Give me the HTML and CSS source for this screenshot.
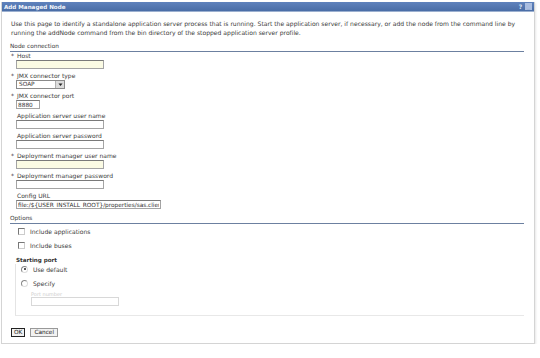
FILE: index.html
```html
<!DOCTYPE html>
<html>
<head>
<meta charset="utf-8">
<link rel="stylesheet" href="styles.css">
</head>
<body>
<div class="panel">
  <div class="titlebar">
    <span class="title">Add Managed Node</span>
    <span class="tools"><span class="help">?</span><span class="min">_</span></span>
  </div>
  <div class="content">
    <p class="desc">Use this page to identify a standalone application server process that is running. Start the application server, if necessary, or add the node from the command line by running the addNode command from the bin directory of the stopped application server profile.</p>
    <div class="section">Node connection</div>
    <div class="field"><div class="label"><span class="req">*</span>Host</div><input class="txt wide req-bg" type="text"></div>
    <div class="field"><div class="label"><span class="req">*</span>JMX connector type</div>
      <div class="select"><span class="sel-val">SOAP</span><span class="sel-btn"><svg width="7" height="7" viewBox="0 0 7 7"><path d="M1.5 2.5h4L3.5 5z" fill="#222"/></svg></span></div>
    </div>
    <div class="field"><div class="label"><span class="req">*</span>JMX connector port</div><input class="txt port" type="text" value="8880"></div>
    <div class="field"><div class="label">Application server user name</div><input class="txt wide" type="text"></div>
    <div class="field"><div class="label">Application server password</div><input class="txt wide" type="text"></div>
    <div class="field"><div class="label"><span class="req">*</span>Deployment manager user name</div><input class="txt wide req-bg" type="text"></div>
    <div class="field"><div class="label"><span class="req">*</span>Deployment manager password</div><input class="txt wide" type="text"></div>
    <div class="field"><div class="label">Config URL</div><input class="txt url" type="text" value="file:/${USER_INSTALL_ROOT}/properties/sas.client.props"></div>
    <div class="section opt">Options</div>
    <label class="check"><span class="cb"></span>Include applications</label>
    <label class="check"><span class="cb"></span>Include buses</label>
    <div class="group">
      <div class="glabel">Starting port</div>
      <div class="gbody">
        <label class="radio"><span class="rb on"></span>Use default</label>
        <label class="radio"><span class="rb"></span>Specify</label>
        <div class="sub"><div class="sublabel">Port number</div><input class="txt subin" type="text" disabled></div>
      </div>
    </div>
    <div class="buttons"><button class="btn ok">OK</button><button class="btn">Cancel</button></div>
  </div>
</div>
</body>
</html>
```
FILE: styles.css
```css
html, body { margin: 0; padding: 0; background: #fff; }
body { font-family: "DejaVu Sans", Verdana, sans-serif; font-size: 6px; color: #3a3a3a; }
.panel {
  margin: 2px 4px 0 1px;
  width: 534px;
  height: 342px;
  border: 1px solid #d4d4d4;
  border-top: none;
  box-sizing: border-box;
  box-shadow: 1px 1px 2px #e8e8e8;
}
.titlebar {
  height: 9px;
  background: linear-gradient(#5f82bd, #4a6da6);
  display: flex;
  justify-content: space-between;
  align-items: center;
  padding: 0 2px 0 2px;
  border-bottom: 1px solid #9cb0d0;
}
.title { color: #f4f6fb; font-weight: bold; font-size: 5.6px; }
.tools { display: flex; gap: 1px; }
.tools span { width: 7px; height: 7px; color: #dde6f5; font-size: 6px; line-height: 7px; text-align: center; font-weight: bold; }
.tools .min { background: #aabde0; color: #4c6fa8; }
.content { padding: 7px 9px 0 8px; }
.desc { margin: 0 0 6px 1px; line-height: 9px; font-size: 6.05px; }
.section {
  font-size: 5.8px;
  border-bottom: 1.5px solid #6c80a0;
  padding-bottom: 1px;
  margin-right: 1px;
  margin-bottom: 0;
  line-height: 7px;
}
.field { margin-bottom: 3px; }
.label { padding-left: 1px; line-height: 8px; height: 8px; }
.req { display: inline-block; width: 6px; color: #333; }
.label:not(:has(.req)) { padding-left: 7px; }
.txt {
  display: block;
  margin: 0 0 0 6px;
  height: 9px;
  box-sizing: border-box;
  border: 1px solid #a4a4a4;
  border-top-color: #7a7a7a;
  font-family: "DejaVu Sans", sans-serif;
  font-size: 5.8px;
  padding: 0 1px;
  background: #fff;
  color: #333;
}
.wide { width: 88px; }
.req-bg { background: #fbfbe4; }
.port { width: 24px; }
.url { width: 145px; }
.select { margin-left: 6px; width: 49px; height: 9px; border: 1px solid #8a8a8a; box-sizing: border-box; display: flex; font-size: 5.8px; line-height: 7px; }
.sel-val { flex: 1; padding-left: 2px; }
.sel-btn { width: 8px; background: #dcdcdc; border-left: 1px solid #b0b0b0; display: flex; align-items: center; justify-content: center; }
.opt { margin-top: 6px; margin-bottom: 3px; }
.check { display: flex; align-items: center; gap: 5px; margin-left: 8px; height: 8px; margin-bottom: 6px; font-size: 6.05px; }
.check + .check { margin-bottom: 8px; }
.cb { width: 5px; height: 5px; border: 1px solid #777; border-right-color: #ccc; border-bottom-color: #ccc; }
.group { margin-left: 5px; }
.glabel { font-size: 5.6px; font-weight: bold; color: #333; line-height: 7px; padding-left: 1px; }
.gbody { border-left: 1px solid #e4e4e4; border-bottom: 1px solid #e8e8e8; padding: 1px 0 9px 4px; margin-right: 1px; }
.radio { display: flex; align-items: center; gap: 5px; height: 8px; margin-bottom: 6px; font-size: 6.05px; margin-left: 1px; }
.rb { width: 5px; height: 5px; border: 1px solid #888; border-radius: 50%; border-right-color: #ddd; border-bottom-color: #ddd; position: relative; }
.rb.on::after { content: ""; position: absolute; left: 1.5px; top: 1.5px; width: 2px; height: 2px; border-radius: 50%; background: #222; }
.sub { margin-left: 11px; margin-top: -2px; }
.sublabel { color: #ccc; font-size: 5px; line-height: 6px; }
.subin { margin-left: 0; width: 88px; background: #fff; border-color: #d8d8d8; }
.buttons { display: flex; gap: 5px; margin-top: 12px; margin-left: 1px; }
.btn { font-family: "DejaVu Sans", sans-serif; font-size: 5.8px; height: 9px; padding: 0 3px; line-height: 7px; background: #f2f2f2; border: 1px solid #999; border-radius: 0; color: #222; }
.btn.ok { border: 1px solid #222; padding: 0 2px; }
```
